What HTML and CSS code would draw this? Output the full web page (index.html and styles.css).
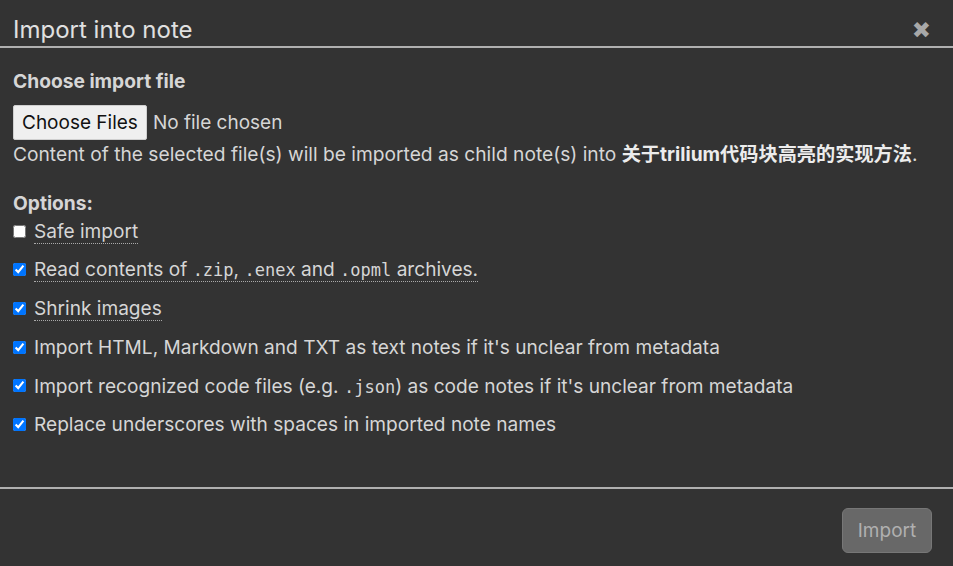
FILE: index.html
```html
<!DOCTYPE html>
<html>
<head>
<meta charset="utf-8">
<link rel="stylesheet" href="styles.css">
</head>
<body>
<div class="modal">
  <div class="modal-header">
    <h5 class="modal-title">Import into note</h5>
    <span class="close">&#10006;</span>
  </div>
  <div class="modal-body">
    <div class="section-title">Choose import file</div>
    <div class="file-row">
      <span class="file-btn">Choose Files</span>
      <span class="file-none">No file chosen</span>
    </div>
    <div class="info">Content of the selected file(s) will be imported as child note(s) into <strong>关于trilium代码块高亮的实现方法</strong>.</div>
    <div class="section-title options-title">Options:</div>
    <div class="options">
      <label class="opt"><input type="checkbox"><span class="tip">Safe import</span></label>
      <label class="opt"><input type="checkbox" checked><span class="tip">Read contents of <code>.zip</code>, <code>.enex</code> and <code>.opml</code> archives.</span></label>
      <label class="opt"><input type="checkbox" checked><span class="tip">Shrink images</span></label>
      <label class="opt"><input type="checkbox" checked><span>Import HTML, Markdown and TXT as text notes if it's unclear from metadata</span></label>
      <label class="opt"><input type="checkbox" checked><span>Import recognized code files (e.g. <code>.json</code>) as code notes if it's unclear from metadata</span></label>
      <label class="opt"><input type="checkbox" checked><span>Replace underscores with spaces in imported note names</span></label>
    </div>
  </div>
  <div class="modal-footer">
    <button class="import-btn">Import</button>
  </div>
</div>
</body>
</html>
```

FILE: styles.css
```css
html, body {
  margin: 0;
  padding: 0;
  background: #333333;
  height: 100%;
}
body {
  font-family: Inter, "Noto Sans CJK SC", sans-serif;
  color: #d6d6d6;
  font-size: 19px;
}
.modal {
  display: flex;
  flex-direction: column;
  height: 566px;
}
.modal-header {
  display: flex;
  align-items: center;
  justify-content: space-between;
  height: 48px;
  padding: 13px 22px 0 13px;
  box-sizing: border-box;
  border-bottom: 2px solid #b0b0b0;
}
.modal-title {
  margin: 0;
  font-size: 24px;
  line-height: 30px;
  font-weight: 400;
  color: #e0e0e0;
}
.close {
  color: #a8a8a8;
  font-size: 23px;
  line-height: 30px;
  font-weight: 700;
  font-family: "DejaVu Sans", sans-serif;
}
.modal-body {
  flex: 1;
  padding: 21px 13px 0;
}
.section-title {
  font-weight: 700;
  font-size: 19.2px;
  line-height: 24px;
}
.file-row {
  display: flex;
  align-items: center;
  margin-top: 12px;
}
.file-btn {
  background: #efefef;
  color: #111;
  border: 1px solid #cfcfcf;
  border-radius: 2px;
  height: 35px;
  box-sizing: border-box;
  padding: 0 8px;
  display: flex;
  align-items: center;
  font-size: 19px;
}
.file-none {
  margin-left: 6px;
  font-size: 19px;
}
.info {
  line-height: 28px;
  font-size: 19.2px;
}
.info strong {
  color: #ececec;
}
.options-title {
  margin-top: 23px;
}
.options {
  display: flex;
  flex-direction: column;
  gap: 12px;
  margin-top: 3px;
}
.opt {
  display: flex;
  align-items: center;
  height: 26.6px;
  font-size: 19.1px;
}
.opt input {
  margin: 0 8px 0 0;
  width: 13px;
  height: 13px;
}
.tip {
  border-bottom: 1px dotted #aaa;
}
code {
  font-family: "DejaVu Sans Mono", monospace;
  font-size: 17px;
}
.modal-footer {
  border-top: 2px solid #b0b0b0;
  display: flex;
  justify-content: flex-end;
  padding: 19px 21px 0;
  height: 79px;
  box-sizing: border-box;
}
.import-btn {
  width: 90px;
  height: 45px;
  background: #686868;
  color: #b0b0b0;
  border: 1px solid #777;
  border-radius: 6px;
  font-family: Inter, sans-serif;
  font-size: 19px;
}
```
